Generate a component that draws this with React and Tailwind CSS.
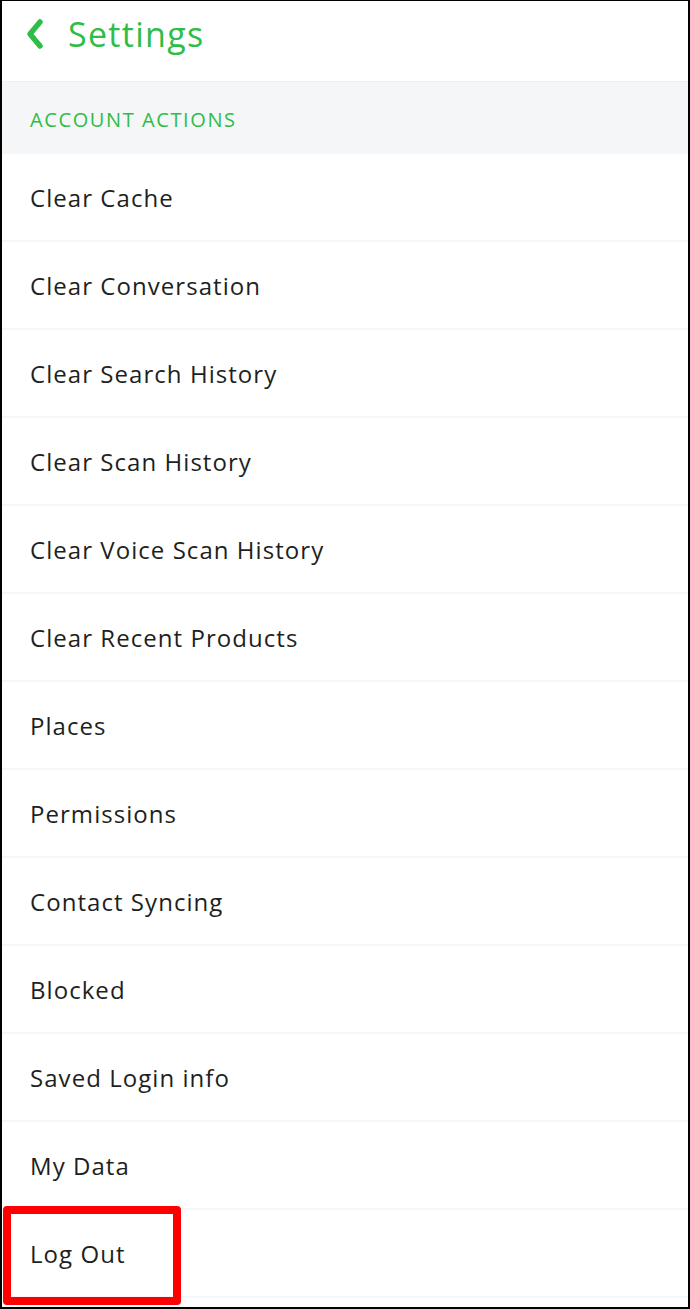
import { useState } from 'react'

// Ajustes de cuenta: lista de acciones
const items = [
  'Clear Cache',
  'Clear Conversation',
  'Clear Search History',
  'Clear Scan History',
  'Clear Voice Scan History',
  'Clear Recent Products',
  'Places',
  'Permissions',
  'Contact Syncing',
  'Blocked',
  'Saved Login info',
  'My Data',
  'Log Out',
]

export default function App() {
  const [selected] = useState('Log Out')

  return (
    <div
      className="relative w-[690px] h-[1309px] bg-white overflow-hidden border-black border-l-2 border-r-2 border-t border-b-2"
      style={{ fontFamily: '"Open Sans", "Noto Sans", sans-serif' }}
    >
      <div className="h-[80px] flex items-center pl-[21px]">
        <svg width="24" height="32" viewBox="0 0 24 32" className="mt-[-14px]">
          <path d="M17 4 L7 16 L17 28" fill="none" stroke="#2ebd47" strokeWidth="5.5" strokeLinecap="round" strokeLinejoin="round" />
        </svg>
        <h1 className="ml-[21px] mt-[-14px] text-[34px] text-[#2ebd47] tracking-[1.3px]">Settings</h1>
      </div>

      <div className="h-[73px] bg-[#f5f6f8] border-t border-[#eff0f2] flex items-center pl-[28px]">
        <span className="text-[20px] text-[#2ebd47] tracking-[1.6px] mt-[4px]">ACCOUNT ACTIONS</span>
      </div>

      <ul>
        {items.map(item => (
          <li key={item} className="h-[88px] flex items-center pl-[28px] border-b-2 border-[#f5f6f8]">
            <span className="text-[24px] text-[#1e1f21] tracking-[1.05px] mt-[2px]">{item}</span>
          </li>
        ))}
      </ul>

      {selected === 'Log Out' && (
        <div className="absolute left-[1px] top-[1205px] w-[178px] h-[99px] border-[8px] border-[#ff0000] rounded-[4px]" />
      )}
    </div>
  )
}
